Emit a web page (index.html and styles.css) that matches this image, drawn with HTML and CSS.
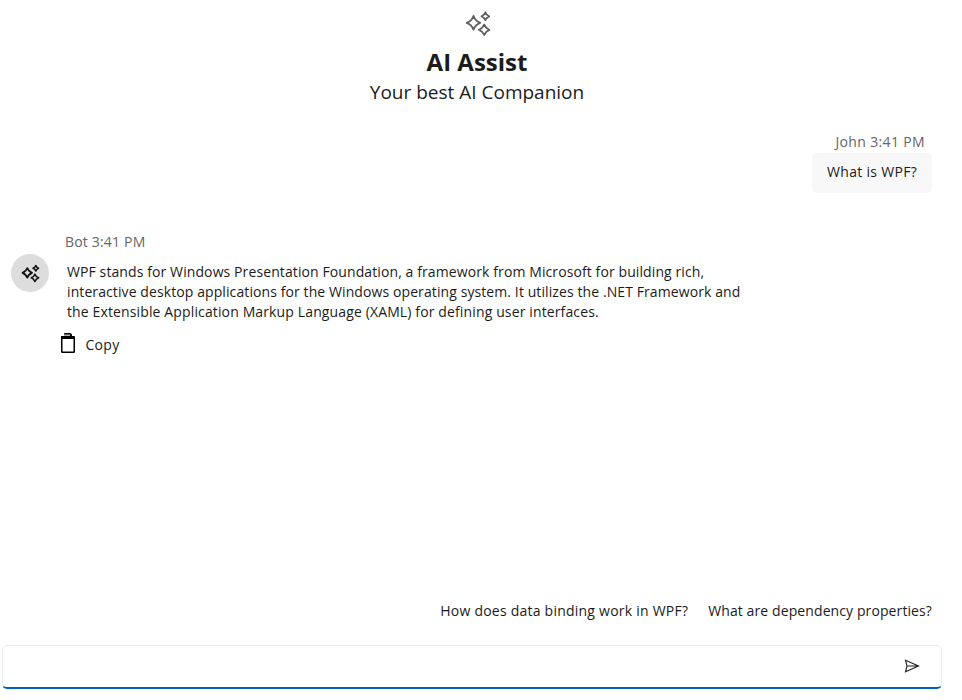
FILE: index.html
```html
<!DOCTYPE html>
<html lang="en">
<head>
<meta charset="utf-8">
<title>AI Assist</title>
<link rel="stylesheet" href="styles.css">
</head>
<body>
<svg class="defs" aria-hidden="true">
  <symbol id="sparkle" viewBox="0 0 26 28">
    <path d="M8.5 7 Q10.3 12.1 15.3 13.8 Q10.3 15.5 8.5 20.6 Q6.7 15.5 1.7 13.8 Q6.7 12.1 8.5 7Z"/>
    <path d="M20.4 3.5 Q21.5 6.3 24.2 7.3 Q21.5 8.3 20.4 11.1 Q19.3 8.3 16.6 7.3 Q19.3 6.3 20.4 3.5Z"/>
    <path d="M19.2 15.7 Q20.6 19.3 24.3 20.8 Q20.6 22.3 19.2 25.9 Q17.8 22.3 14.1 20.8 Q17.8 19.3 19.2 15.7Z"/>
  </symbol>
</svg>
<main class="assist">
  <header class="banner">
    <svg class="banner-icon"><use href="#sparkle"/></svg>
    <h1>AI Assist</h1>
    <p>Your best AI Companion</p>
  </header>
  <section class="outgoing">
    <div class="meta">John 3:41 PM</div>
    <div class="bubble">What is WPF?</div>
  </section>
  <section class="incoming">
    <div class="avatar"><svg><use href="#sparkle"/></svg></div>
    <div class="content">
      <div class="meta">Bot 3:41 PM</div>
      <p class="answer"><span class="l1">WPF stands for Windows Presentation Foundation, a framework from Microsoft for building rich,</span><br><span class="l2">interactive desktop applications for the Windows operating system. It utilizes the .NET Framework and</span><br><span class="l3">the Extensible Application Markup Language (XAML) for defining user interfaces.</span></p>
      <div class="copy">
        <svg viewBox="0 0 14 20"><path d="M0 3H3V1Q3 0 4 0H9Q11 0 11 3H13Q14 3 14 4V19Q14 20 13 20H1Q0 20 0 19Z M1.5 6V18.6H12.5V6Z" fill-rule="evenodd"/><path d="M3 1.6H9V2.7H3Z" fill="#fff"/></svg>
        <span>Copy</span>
      </div>
    </div>
  </section>
  <div class="suggestions"><span class="s1">How does data binding work in WPF?</span><span class="s2">What are dependency properties?</span></div>
  <div class="prompt">
    <svg viewBox="0 0 16 14"><path d="M1.5 1.2L14.5 7L1.5 12.8L3 7Z M3 7H14"/></svg>
  </div>
</main>
</body>
</html>
```
FILE: styles.css
```css
* { box-sizing: border-box; }
body { margin: 0; background: #fff; color: #1b1b1b; font: 14px/20px "Open Sans", "Noto Sans", sans-serif; }
h1, p { margin: 0; }
.defs { display: block; width: 0; height: 0; }
.assist { display: flex; flex-direction: column; width: 954px; height: 700px; white-space: nowrap; }
.banner { display: flex; flex-direction: column; align-items: center; height: 132px; padding-top: 9px; }
.banner-icon { width: 26px; height: 28px; margin-left: 2px; fill: none; stroke: #5f5f5f; stroke-width: 1.9; stroke-linejoin: round; }
h1 { margin-top: 8px; font-size: 24px; line-height: 34px; font-weight: 700; }
.banner p { font-size: 19px; line-height: 26px; }
.meta { color: #666; letter-spacing: .18px; }
.outgoing { display: flex; flex-direction: column; align-items: flex-end; height: 100px; padding-right: 22px; }
.outgoing .meta { padding-right: 7px; letter-spacing: .35px; }
.bubble { width: 120px; height: 40px; margin-top: 1px; padding: 9px 0 0 15px; border-radius: 5px; background: #f8f8f8; letter-spacing: .32px; }
.incoming { display: flex; padding-left: 11px; }
.avatar { display: flex; align-items: center; justify-content: center; width: 38px; height: 38px; margin-top: 22px; border-radius: 50%; background: #ddd; }
.avatar svg { width: 19px; height: 20px; fill: none; stroke: #111; stroke-width: 2.3; stroke-linejoin: round; }
.content { padding-left: 16px; }
.answer { margin-top: 10px; padding-left: 2px; }
.l1 { letter-spacing: .1px; }
.l2 { letter-spacing: .095px; }
.l3 { letter-spacing: .13px; }
.copy { display: flex; gap: 10.5px; margin: 9px 0 0 -4px; align-items: center; height: 24px; letter-spacing: .3px; }
.copy svg { width: 14px; height: 20px; }
.copy span { position: relative; top: 2px; }
.suggestions { display: flex; justify-content: flex-end; gap: 20px; margin-top: auto; padding-right: 22px; }
.s1 { letter-spacing: .23px; }
.s2 { letter-spacing: .1px; }
.prompt { display: flex; align-items: center; justify-content: flex-end; width: 940px; height: 44px; margin: 24px 0 11px 2px; padding: 0 21.5px 1px 0; border: 1px solid #ececec; border-bottom: 2px solid #005fb8; border-radius: 5px; }
.prompt svg { width: 16px; height: 14px; fill: none; stroke: #222; stroke-width: 1.1; }
```
